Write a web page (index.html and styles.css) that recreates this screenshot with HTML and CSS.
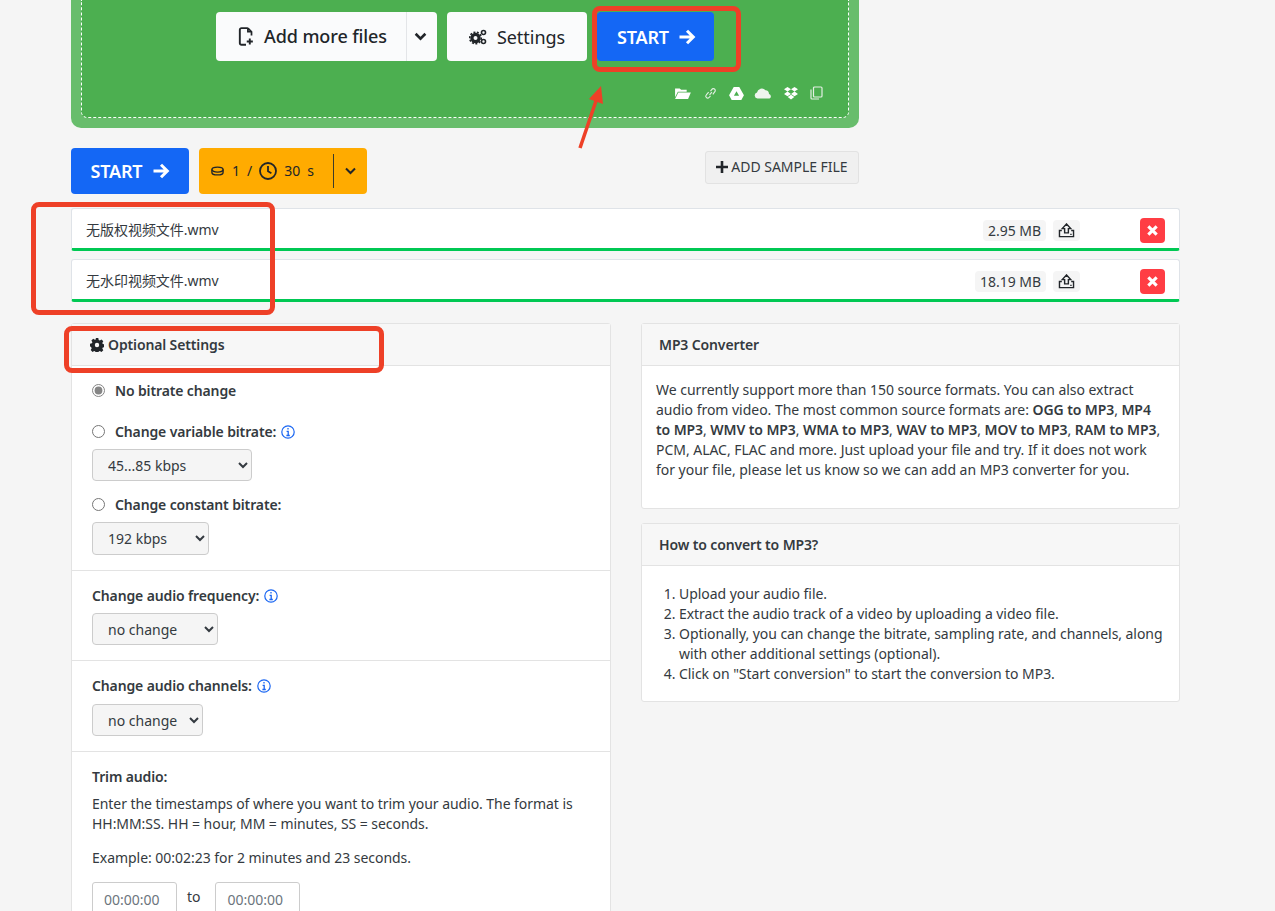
FILE: index.html
```html
<!DOCTYPE html>
<html lang="en">
<head>
<meta charset="utf-8">
<title>MP3 Converter</title>
<link rel="stylesheet" href="styles.css">
</head>
<body>
<main class="page">
  <section class="upload">
    <div class="drop">
      <div class="drop-buttons">
        <div class="btn-white split">
          <span class="split-main">
            <svg class="ico-file" viewBox="0 0 16 20" width="16" height="19"><path d="M10 1.200H3.200A1.700 1.700 0 0 0 1.500 2.900V17a1.700 1.700 0 0 0 1.700 1.700H8" fill="none" stroke="#212529" stroke-width="2"/><path d="M10 1.200V5h3.800M10 1.200l3.800 3.800V9" fill="none" stroke="#212529" stroke-width="1.800"/><path d="M12 12v6.500M8.800 15.200h6.400" stroke="#212529" stroke-width="2"/></svg>
            Add more files
          </span>
          <span class="split-caret"><svg viewBox="0 0 12 8" width="13" height="9"><path d="M1.500 1.500 6 6l4.500-4.500" fill="none" stroke="#212529" stroke-width="2.400"/></svg></span>
        </div>
        <div class="btn-white settings">
          <svg viewBox="0 0 18 16" width="18" height="16"><circle cx="6.500" cy="9" r="3.600" fill="none" stroke="#212529" stroke-width="3.200"/><circle cx="6.500" cy="9" r="5.800" fill="none" stroke="#212529" stroke-width="1.600" stroke-dasharray="2 1.500"/><circle cx="14.500" cy="3.500" r="2" fill="none" stroke="#212529" stroke-width="1.600"/><circle cx="14.500" cy="12.500" r="2" fill="none" stroke="#212529" stroke-width="1.600"/></svg>
          Settings
        </div>
        <div class="btn-start top-start">START <svg class="arrow" viewBox="0 0 18 16" width="18" height="16"><path d="M1.500 8h14M9 1.700 15.300 8 9 14.300" fill="none" stroke="#fff" stroke-width="3"/></svg></div>
      </div>
      <div class="sources">
        <svg class="src-folder" viewBox="0 0 18 14" width="17" height="13"><path d="M1 3V1.500h5l1.500 1.500h6v2H4L1 11z" fill="#fff"/><path d="M4.500 6H18l-3 7H1z" fill="#fff"/></svg>
        <svg viewBox="0 0 14 14" width="13" height="13"><path d="M6 8.500 8.500 5.500M5 5.500 2.500 8.500a2 2 0 0 0 3 2.800L7 9.500M7 4.500l1.500-2a2 2 0 0 1 3.200 2.500L9.500 8" fill="none" stroke="#e3efe3" stroke-width="1.200"/></svg>
        <svg class="src-drive" viewBox="0 0 16 14" width="15" height="13"><path fill-rule="evenodd" d="M5 0h6l5 9-2.800 5H2.800L0 9zM8 4.500 5.200 9.500h5.600z" fill="#fff"/></svg>
        <svg viewBox="0 0 18 12" width="18" height="12"><path d="M3.500 11.500A3 3 0 0 1 3 5.600 4.800 4.800 0 0 1 11.500 3.300 3.800 3.800 0 0 1 15 7a2.400 2.400 0 0 1 .5 4.500z" fill="#eef5ee"/></svg>
        <svg viewBox="0 0 14 13" width="14" height="13"><path d="M3.500 0 7 2.300 3.500 4.600 0 2.300zM10.500 0 14 2.300l-3.500 2.300L7 2.300zM3.500 4.600 7 6.900 3.500 9.200 0 6.900zM10.500 4.600 14 6.900l-3.500 2.300L7 6.900zM3.700 10 7 7.800l3.300 2.200L7 12.600z" fill="#fff"/></svg>
        <svg viewBox="0 0 13 14" width="13" height="14"><rect x="3.500" y="1" width="8.500" height="10" rx="1" fill="none" stroke="#e3efe3" stroke-width="1.200"/><path d="M1 3.500V12a1 1 0 0 0 1 1h7" fill="none" stroke="#e3efe3" stroke-width="1.200"/></svg>
      </div>
    </div>
  </section>

  <div class="actions">
    <div class="action-left">
      <div class="btn-start">START <svg class="arrow" viewBox="0 0 18 16" width="18" height="16"><path d="M1.500 8h14M9 1.700 15.300 8 9 14.300" fill="none" stroke="#fff" stroke-width="3"/></svg></div>
      <div class="cost">
        <span class="cost-main">
          <svg class="coin" viewBox="0 0 14 10" width="13" height="10"><ellipse cx="7" cy="3.500" rx="6" ry="2.700" fill="none" stroke="#212529" stroke-width="1.500"/><path d="M1 3.500v3C1 8 3.700 9.200 7 9.200S13 8 13 6.500v-3" fill="none" stroke="#212529" stroke-width="1.500"/></svg>
          <span>1</span><span>/</span>
          <svg viewBox="0 0 18 18" width="18" height="18"><circle cx="9" cy="9" r="8" fill="none" stroke="#212529" stroke-width="1.800"/><path d="M9 4v5.300l3.400 2" fill="none" stroke="#212529" stroke-width="1.800"/></svg>
          <span class="cost-time">30&nbsp; s</span>
        </span>
        <span class="cost-caret"><svg viewBox="0 0 12 8" width="13" height="8"><path d="M1.500 1.500 6 6l4.500-4.500" fill="none" stroke="#212529" stroke-width="2"/></svg></span>
      </div>
    </div>
    <div class="sample"><svg viewBox="0 0 12 12" width="12" height="12"><path d="M6 0v12M0 6h12" stroke="#212529" stroke-width="2.600"/></svg>ADD SAMPLE FILE</div>
  </div>

  <div class="files">
    <div class="file">
      <span class="file-name">无版权视频文件.wmv</span>
      <span class="file-size">2.95 MB</span>
      <span class="file-up"><svg viewBox="0 0 18 16" width="17" height="15"><path d="M4 8H1.500v6.500h15V8H14M1.500 8" fill="none" stroke="#212529" stroke-width="1.500"/><path d="M9 1 4.500 6H7v4.500h4V6h2.500z" fill="none" stroke="#212529" stroke-width="1.500"/><path d="M13 12.200h1.500" stroke="#212529" stroke-width="1.300"/></svg></span>
      <span class="file-del"><svg viewBox="0 0 10 10" width="11" height="11"><path d="M1.200 1.200l7.600 7.600M8.800 1.200 1.200 8.800" stroke="#fff" stroke-width="2.800"/></svg></span>
    </div>
    <div class="file">
      <span class="file-name">无水印视频文件.wmv</span>
      <span class="file-size">18.19 MB</span>
      <span class="file-up"><svg viewBox="0 0 18 16" width="17" height="15"><path d="M4 8H1.500v6.500h15V8H14M1.500 8" fill="none" stroke="#212529" stroke-width="1.500"/><path d="M9 1 4.500 6H7v4.500h4V6h2.500z" fill="none" stroke="#212529" stroke-width="1.500"/><path d="M13 12.200h1.500" stroke="#212529" stroke-width="1.300"/></svg></span>
      <span class="file-del"><svg viewBox="0 0 10 10" width="11" height="11"><path d="M1.200 1.200l7.600 7.600M8.800 1.200 1.200 8.800" stroke="#fff" stroke-width="2.800"/></svg></span>
    </div>
  </div>

  <div class="columns">
    <section class="card options">
      <h2 class="card-head"><svg viewBox="0 0 14 14" width="14" height="14"><path fill-rule="evenodd" d="M5.700 0h2.600l.4 1.900 1.100.5 1.700-1 1.800 1.800-1 1.700.5 1.100 1.900.4v2.600l-1.900.4-.5 1.100 1 1.700-1.800 1.800-1.700-1-1.100.5-.4 1.900H5.700l-.4-1.900-1.100-.5-1.700 1L.7 12l1-1.700-.5-1.100L0 8.300V5.700l1.900-.4.500-1.100-1-1.700L3.200.7l1.700 1 1.100-.5zM7 4.800a2.200 2.200 0 1 0 0 4.400 2.200 2.200 0 0 0 0-4.400z" fill="#212529"/></svg> Optional Settings</h2>
      <div class="group group-bitrate">
        <label class="radio-row first"><input type="radio" name="bitrate" checked><span>No bitrate change</span></label>
        <label class="radio-row second"><input type="radio" name="bitrate"><span>Change variable bitrate:</span><svg class="info" viewBox="0 0 14 14" width="14" height="14"><circle cx="7" cy="7" r="6.200" fill="none" stroke="#1a66f2" stroke-width="1.200"/><path d="M7 3v1.600M5.600 6.300H7.200V10.500M5.400 10.500h3.400" fill="none" stroke="#1a66f2" stroke-width="1.300"/></svg></label>
        <select class="sel sel-var"><option>45...85 kbps</option></select>
        <label class="radio-row third"><input type="radio" name="bitrate"><span>Change constant bitrate:</span></label>
        <select class="sel sel-const"><option>192 kbps</option></select>
      </div>
      <div class="group group-freq">
        <div class="label-row"><span>Change audio frequency:</span><svg class="info" viewBox="0 0 14 14" width="14" height="14"><circle cx="7" cy="7" r="6.200" fill="none" stroke="#1a66f2" stroke-width="1.200"/><path d="M7 3v1.600M5.600 6.300H7.200V10.500M5.400 10.500h3.400" fill="none" stroke="#1a66f2" stroke-width="1.300"/></svg></div>
        <select class="sel sel-freq"><option>no change</option></select>
      </div>
      <div class="group group-chan">
        <div class="label-row"><span>Change audio channels:</span><svg class="info" viewBox="0 0 14 14" width="14" height="14"><circle cx="7" cy="7" r="6.200" fill="none" stroke="#1a66f2" stroke-width="1.200"/><path d="M7 3v1.600M5.600 6.300H7.200V10.500M5.400 10.500h3.400" fill="none" stroke="#1a66f2" stroke-width="1.300"/></svg></div>
        <select class="sel sel-chan"><option>no change</option></select>
      </div>
      <div class="group group-trim">
        <div class="label-row">Trim audio:</div>
        <p class="trim-desc">Enter the timestamps of where you want to trim your audio. The format is HH:MM:SS. HH = hour, MM = minutes, SS = seconds.</p>
        <p class="trim-example">Example: 00:02:23 for 2 minutes and 23 seconds.</p>
        <div class="trim-inputs">
          <input class="time" placeholder="00:00:00">
          <span>to</span>
          <input class="time" placeholder="00:00:00">
        </div>
      </div>
    </section>

    <div class="side">
      <section class="card">
        <h2 class="card-head info-head">MP3 Converter</h2>
        <div class="card-body about">We currently support more than 150 source formats. You can also extract audio from video. The most common source formats are: <b>OGG to MP3</b>, <b>MP4 to MP3</b>, <b>WMV to MP3</b>, <b>WMA to MP3</b>, <b>WAV to MP3</b>, <b>MOV to MP3</b>, <b>RAM to MP3</b>, PCM, ALAC, FLAC and more. Just upload your file and try. If it does not work for your file, please let us know so we can add an MP3 converter for you.</div>
      </section>
      <section class="card">
        <h2 class="card-head info-head">How to convert to MP3?</h2>
        <ol class="card-body steps">
          <li>Upload your audio file.</li>
          <li>Extract the audio track of a video by uploading a video file.</li>
          <li>Optionally, you can change the bitrate, sampling rate, and channels, along with other additional settings (optional).</li>
          <li>Click on "Start conversion" to start the conversion to MP3.</li>
        </ol>
      </section>
    </div>
  </div>
</main>

<div class="mark mark-start"></div>
<div class="mark mark-files"></div>
<div class="mark mark-options"></div>
<svg class="mark-arrow" viewBox="0 0 30 66" width="30" height="66"><path d="M3 64 20 14" stroke="#ee4027" stroke-width="3.500" fill="none"/><path d="M24 2 12 15l14 5z" fill="#ee4027"/></svg>
</body>
</html>
```
FILE: styles.css
```css
* { box-sizing: border-box; }
html, body { margin: 0; height: 911px; overflow: hidden; }
body {
  background: #f5f5f5;
  color: #343a40;
  font-family: "Noto Sans", "Noto Sans CJK SC", sans-serif;
  font-size: 14px;
  line-height: 20px;
  letter-spacing: -0.03px;
  position: relative;
}
.page { width: 1109px; margin-left: 71px; }

/* upload box */
.upload {
  width: 788px;
  height: 128px;
  background: #68bd6c;
  border-radius: 0 0 10px 10px;
  padding: 0 10px 10px;
}
.drop {
  height: 118px;
  background: #4caf50;
  border: 1px dashed #fff;
  border-top: 0;
  border-radius: 0 0 6px 6px;
  padding: 12px 0 0 134px;
}
.drop-buttons { display: flex; gap: 10px; height: 49px; }
.btn-white {
  background: #fafbfc;
  border-radius: 4px;
  color: #212529;
  font-size: 18px;
  display: flex;
  align-items: center;
}
.split { width: 221px; }
.split-main { flex: 1; display: flex; align-items: center; gap: 10px; padding: 0 0 1px 22px; height: 100%; font-weight: 500; letter-spacing: -0.1px; }
.split-caret { width: 31px; height: 100%; border-left: 1px solid #e3e5e8; padding-right: 3px; display: flex; align-items: center; justify-content: center; }
.settings { width: 140px; justify-content: center; gap: 10px; }
.btn-start {
  width: 118px;
  height: 46px;
  background: #1467f5;
  color: #fff;
  border-radius: 4px;
  font-size: 18px;
  font-weight: 600;
  letter-spacing: -0.2px;
  display: flex;
  align-items: center;
  justify-content: center;
  gap: 10px;
  padding-left: 1px;
}
.top-start { width: 117px; height: 49px; gap: 9px; padding-left: 2px; }
.sources {
  display: flex;
  justify-content: flex-end;
  align-items: center;
  gap: 12px;
  padding-right: 25px;
  margin-top: 23px;
  height: 18px;
  margin-left: -134px;
}
.src-folder { margin-right: 1px; }
.src-drive { margin-right: -2px; }

/* actions */
.actions { width: 788px; margin-top: 20px; display: flex; justify-content: space-between; align-items: flex-start; }
.action-left { display: flex; gap: 10px; }
.cost {
  width: 168px;
  height: 46px;
  background: #ffab00;
  color: #212529;
  border-radius: 4px;
  display: flex;
  align-items: center;
}
.cost-main { width: 134px; display: flex; align-items: center; gap: 7px; padding-left: 12px; }
.coin { margin-right: 1px; }
.cost-time { white-space: nowrap; }
.cost-caret { flex: 1; height: 34px; border-left: 1px solid #3b3b2a; display: flex; align-items: center; justify-content: center; }
.sample {
  width: 154px;
  height: 33px;
  margin-top: 3px;
  padding-bottom: 2px;
  background: #f0f0f0;
  border: 1px solid #e2e2e2;
  border-radius: 3px;
  display: flex;
  align-items: center;
  justify-content: center;
  gap: 3px;
  color: #343a40;
  white-space: nowrap;
}

/* files */
.files { margin-top: 14px; display: flex; flex-direction: column; gap: 8px; }
.file {
  height: 43px;
  background: #fff;
  border: 1px solid #dfe3e8;
  border-bottom: 3px solid #00c853;
  border-radius: 3px;
  display: flex;
  align-items: center;
  padding: 3px 14px 0;
}
.file-name { flex: 1; color: #343a40; }
.file-size { background: #f5f5f5; border-radius: 4px; padding: 0 5px; height: 21px; line-height: 21px; }
.file-up { width: 27px; height: 21px; margin-left: 7px; background: #f5f5f5; border-radius: 4px; display: flex; align-items: center; justify-content: center; }
.file-del { width: 25px; height: 25px; margin-left: 60px; background: #ff3d44; border-radius: 4px; display: flex; align-items: center; justify-content: center; }

/* columns */
.columns { margin-top: 21px; display: grid; grid-template-columns: 540px 539px; gap: 30px; align-items: start; }
.card { background: #fff; border: 1px solid #e3e3e3; border-radius: 3px; }
.card-head {
  margin: 0;
  height: 42px;
  background: #f7f7f7;
  border-bottom: 1px solid #e3e3e3;
  font-size: 14px;
  font-weight: 600;
  letter-spacing: -0.13px;
  color: #343a40;
  display: flex;
  align-items: center;
  gap: 4px;
  padding: 0 0 0 18px;
}
.info-head { padding-left: 17px; }
.group { padding: 0 20px; border-bottom: 1px solid #e3e3e3; }
.group-bitrate { height: 205px; padding-top: 15px; }
.group-freq { height: 90px; padding-top: 15px; }
.group-chan { height: 91px; padding-top: 15px; }
.group-trim { padding-top: 15px; border-bottom: 0; }
.radio-row { display: flex; align-items: center; font-weight: 600; height: 20px; letter-spacing: -0.13px; }
.radio-row input { margin: 0 10px 0 0; width: 13px; height: 13px; position: relative; top: -1px; accent-color: #858585; }
.radio-row .info, .label-row .info { margin-left: 5px; }
.second { margin-top: 21px; }
.third { margin-top: 14px; }
.label-row { display: flex; align-items: center; font-weight: 600; height: 20px; letter-spacing: -0.13px; }
.sel {
  display: block;
  height: 32px;
  background: #f5f5f5;
  border: 1px solid #ccc;
  border-radius: 4px;
  color: #343a40;
  font-family: inherit;
  font-size: 14px;
  padding: 0 0 0 11px;
}
.sel-var { width: 160px; margin-top: 7px; }
.sel-const { width: 117px; height: 33px; margin-top: 7px; }
.sel-freq { width: 126px; margin-top: 7px; }
.sel-chan { width: 111px; margin-top: 8px; }
.trim-desc { margin: 7px 0 0; letter-spacing: -0.055px; }
.trim-example { margin: 14px 0 0; }
.trim-inputs { margin-top: 14px; display: flex; align-items: flex-start; gap: 10px; }
.trim-inputs span { line-height: 30px; margin-right: 5px; }
.time {
  width: 85px;
  height: 34px;
  border: 1px solid #ccc;
  border-radius: 3px;
  padding: 0 11px;
  font-family: inherit;
  font-size: 14px;
  background: #fff;
}
.time::placeholder { color: #6c757d; }

.side { display: flex; flex-direction: column; gap: 14px; }
.card-body { margin: 0; }
.about { padding: 14px 14px 20px 14px; height: 142px; }
.about b { letter-spacing: -0.1px; font-weight: 600; }
.steps { padding: 18px 10px 17px 37px; letter-spacing: -0.055px; }

/* annotations */
.mark { position: absolute; border: 5px solid #ee4027; border-radius: 8px; }
.mark-start { left: 592px; top: 6px; width: 149px; height: 66px; }
.mark-files { left: 31px; top: 202px; width: 244px; height: 113px; }
.mark-options { left: 64px; top: 326px; width: 320px; height: 47px; }
.mark-arrow { position: absolute; left: 577px; top: 84px; }
```
